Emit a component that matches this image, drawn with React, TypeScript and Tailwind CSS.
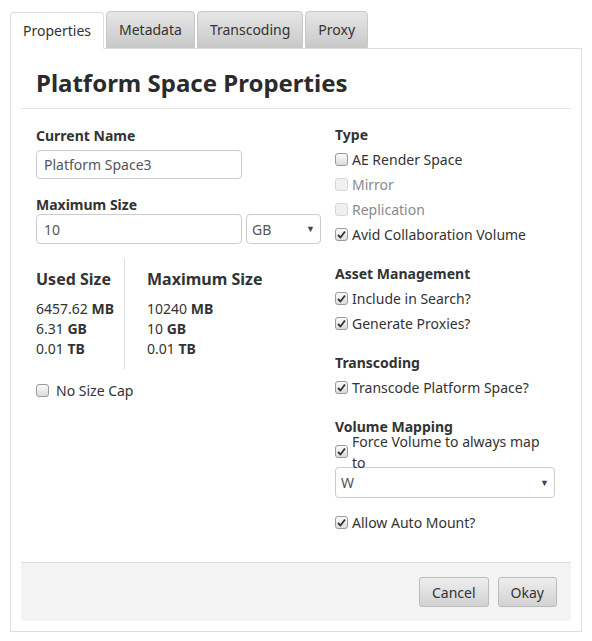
import React from "react";

const Box = ({ checked, disabled }: { checked?: boolean; disabled?: boolean }) => (
  <span
    className={`inline-flex w-[13px] h-[13px] mr-[4px] rounded-[3px] border items-center justify-center shrink-0 ${
      disabled ? "border-[#d6d6d6] bg-[#f0f0f0]" : "border-[#9a9a9a] bg-gradient-to-b from-[#fafafa] to-[#dcdcdc]"
    }`}
  >
    {checked && (
      <svg width="9" height="9" viewBox="0 0 9 9">
        <path d="M1 5 L3.5 7.5 L8 1.5" stroke="#333" strokeWidth="1.8" fill="none" />
      </svg>
    )}
  </span>
);

const Check = ({ label, checked, disabled }: { label: string; checked?: boolean; disabled?: boolean }) => (
  <div className={`flex items-center h-[25px] ${disabled ? "text-[#8a8a8a]" : ""}`}>
    <Box checked={checked} disabled={disabled} />
    <span>{label}</span>
  </div>
);

const Caret = () => <span className="text-[9px] text-[#444]">▼</span>;

const H = ({ children, first }: { children: React.ReactNode; first?: boolean }) => (
  <div className={`font-bold h-[25px] flex items-center ${first ? "" : "mt-[14px]"}`}>{children}</div>
);

export default function App() {
  return (
    <div className="w-[592px] h-[641px] bg-white text-[#333] text-[14px] font-[family-name:'Liberation_Sans',Arial,sans-serif] pt-[12px] px-[10px]">
      <div className="flex h-[36px] items-end">
        <div className="h-[37px] px-[12px] flex items-center border border-[#ddd] border-b-white bg-white rounded-t-[4px] relative z-10 -mb-px">Properties</div>
        {["Metadata", "Transcoding", "Proxy"].map((t) => (
          <div key={t} className="ml-[2px] h-[37px] px-[12px] flex items-center border border-[#c8c8c8] rounded-t-[4px] bg-gradient-to-b from-[#e6e6e6] to-[#c9c9c9] text-[#333]">{t}</div>
        ))}
      </div>
      <div className="border border-[#ddd] h-[584px] px-[10px] pb-[10px] flex flex-col">
        <h1 className="text-[24px] font-bold text-[#2b2b2b] pl-[15px] pt-[20px] pb-[11px] border-b border-[#e5e5e5] leading-[28px]">Platform Space Properties</h1>
        <div className="flex flex-1 px-[15px] pt-[13px]">
          <div className="w-[299px] pt-[3px]">
            <div className="font-bold h-[20px] flex items-center">Current Name</div>
            <div className="mt-[5px] w-[206px] h-[29px] border border-[#ccc] rounded-[4px] flex items-center px-[7px] text-[#555]">Platform Space3</div>
            <div className="font-bold mt-[15px] h-[20px] flex items-center">Maximum Size</div>
            <div className="flex gap-[4px]">
              <div className="w-[206px] h-[30px] border border-[#ccc] rounded-[4px] flex items-center px-[7px] text-[#555]">10</div>
              <div className="w-[75px] h-[30px] border border-[#ccc] rounded-[4px] flex items-center justify-between px-[5px] text-[#555]">GB <Caret /></div>
            </div>
            <div className="flex mt-[15px]">
              <div className="w-[89px] border-r border-[#ddd] py-[10px]">
                <div className="text-[16px] font-bold mb-[10px] h-[20px] flex items-center">Used Size</div>
                <div className="leading-[20px]">6457.62 <b>MB</b></div>
                <div className="leading-[20px]">6.31 <b>GB</b></div>
                <div className="leading-[20px]">0.01 <b>TB</b></div>
              </div>
              <div className="pl-[22px] py-[10px]">
                <div className="text-[16px] font-bold mb-[10px] h-[20px] flex items-center">Maximum Size</div>
                <div className="leading-[20px]">10240 <b>MB</b></div>
                <div className="leading-[20px]">10 <b>GB</b></div>
                <div className="leading-[20px]">0.01 <b>TB</b></div>
              </div>
            </div>
            <div className="flex items-center h-[20px] mt-[11px]"><Box /><span className="ml-[3px]">No Size Cap</span></div>
          </div>
          <div className="flex-1">
            <H first>Type</H>
            <Check label="AE Render Space" />
            <Check label="Mirror" disabled />
            <Check label="Replication" disabled />
            <Check label="Avid Collaboration Volume" checked />
            <H>Asset Management</H>
            <Check label="Include in Search?" checked />
            <Check label="Generate Proxies?" checked />
            <H>Transcoding</H>
            <Check label="Transcode Platform Space?" checked />
            <H>Volume Mapping</H>
            <Check label="Force Volume to always map to" checked />
            <div className="mt-[3px] w-[220px] h-[31px] border border-[#ccc] rounded-[4px] flex items-center justify-between px-[5px] text-[#555]">W <Caret /></div>
            <div className="mt-[12px]"><Check label="Allow Auto Mount?" checked /></div>
          </div>
        </div>
        <div className="h-[59px] bg-[#f3f3f3] border-t border-[#ddd] rounded-b-[4px] flex items-center justify-end gap-[9px] pr-[14px]">
          <div className="h-[30px] px-[12px] flex items-center border border-[#bbb] rounded-[3px] bg-gradient-to-b from-[#eee] to-[#d2d2d2] text-[#333]">Cancel</div>
          <div className="h-[30px] px-[12px] flex items-center border border-[#bbb] rounded-[3px] bg-gradient-to-b from-[#eee] to-[#d2d2d2] text-[#333]">Okay</div>
        </div>
      </div>
    </div>
  );
}
